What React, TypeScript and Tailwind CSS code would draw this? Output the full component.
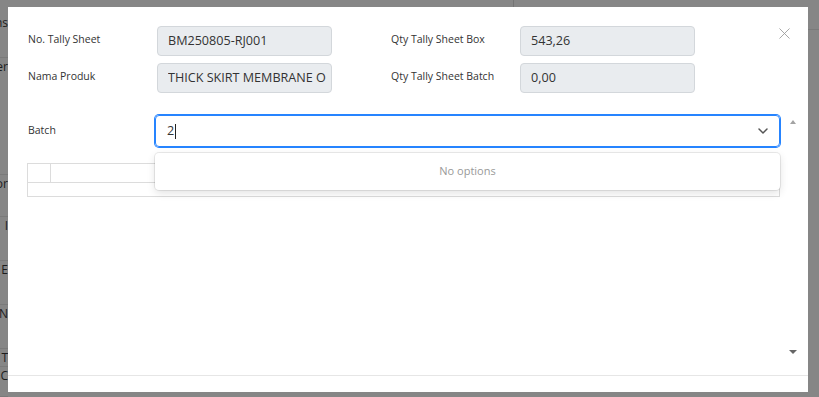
import { ChevronDown, X } from "lucide-react";

const BG_ROWS = [
  { t: "Trans", h: "h-[44px]" },
  { t: "Supplier", h: "h-[117px]" },
  { t: "Nomor", h: "h-[42px]" },
  { t: "I", h: "h-[44px]" },
  { t: "E", h: "h-[44px]" },
  { t: "N", h: "h-[44px]" },
  { t: "T", h: "h-[18px]" },
  { t: "C", h: "h-[30px]" },
];

function Field({ label, value }: { label: string; value: string }) {
  return (
    <div className="flex items-center">
      <div className="mb-[3px] w-[129px] text-[10.5px] text-[#333]">{label}</div>
      <div className="flex h-[30px] w-[175px] items-center rounded-[4px] border border-[#d3d7db] bg-[#e9ecef] pl-[10px] pr-[5px] text-[12.6px] text-[#333]">
        <div className="flex-1 overflow-hidden whitespace-nowrap">{value}</div>
      </div>
    </div>
  );
}

export default function App() {
  return (
    <div className="relative h-[397px] w-[819px] overflow-hidden bg-[#868686] font-['Open_Sans','Noto_Sans',sans-serif]">
      {/* page behind the overlay */}
      <div className="flex h-full">
        <div className="flex w-[8px] flex-col pt-[14px] text-[12px] text-[#1c1c1c]">
          {BG_ROWS.map((r, i) => (
            <div key={i} className={`${r.h} flex justify-end overflow-hidden whitespace-nowrap border-b border-[#7a7a7a]`}>
              {r.t}
            </div>
          ))}
        </div>
        <div className="ml-[505px] h-[7px] w-px bg-[#747474]" />
        <div className="ml-auto mt-[29px] h-px w-[11px] bg-[#7a7a7a]" />
      </div>

      {/* modal */}
      <div className="absolute left-[8px] top-[7px] flex h-[385px] w-[800px] flex-col bg-white">
        <div className="relative flex flex-1 flex-col px-[20px] pt-[19px]">
          <button className="absolute right-[14px] top-[17px] text-[#9a9a9a]">
            <X className="h-[19px] w-[19px]" strokeWidth={1.1} />
          </button>
          <div className="flex gap-[59px]">
            <div className="flex flex-col gap-[7px]">
              <Field label="No. Tally Sheet" value="BM250805-RJ001" />
              <Field label="Nama Produk" value="THICK SKIRT MEMBRANE O" />
            </div>
            <div className="flex flex-col gap-[7px]">
              <Field label="Qty Tally Sheet Box" value="543,26" />
              <Field label="Qty Tally Sheet Batch" value="0,00" />
            </div>
          </div>

          <div className="mt-[22px] flex flex-1">
            <div className="mr-px flex flex-1 flex-col">
              <div className="flex items-center">
                <div className="w-[127px] text-[10.5px] text-[#333]">Batch</div>
                <div className="relative flex-1">
                  <div className="flex h-[32px] items-center rounded-[4px] border border-[#2684ff] pl-[11px] pr-[8px] shadow-[0_0_0_1px_#2684ff] text-[12.6px] text-[#333]">
                    <span>2</span>
                    <span className="ml-px h-[15px] w-px bg-[#222]" />
                    <ChevronDown className="ml-auto h-[16px] w-[16px] text-[#555]" strokeWidth={2.2} />
                  </div>
                  <div className="absolute left-0 right-0 top-[38px] z-10 flex h-[37px] items-center justify-center rounded-[4px] bg-white text-[11px] text-[#999] shadow-[0_0_0_1px_rgba(0,0,0,0.08),0_3px_8px_rgba(0,0,0,0.12)]">
                    No options
                  </div>
                </div>
              </div>
              <div className="ml-[-1px] mt-[16px] border border-[#dcdcdc]">
                <div className="flex h-[19px] border-b border-[#dcdcdc]">
                  <div className="w-[23px] border-r border-[#dcdcdc]" />
                </div>
                <div className="h-[13px]" />
              </div>
            </div>
            <div className="ml-[8px] mr-[-9px] flex w-[8px] flex-col items-center justify-between pb-[21px] pt-[5px]">
              <div className="h-0 w-0 border-x-[3px] border-b-[4px] border-x-transparent border-b-[#a3a3a3]" />
              <div className="h-0 w-0 border-x-[4px] border-t-[4px] border-x-transparent border-t-[#666]" />
            </div>
          </div>
        </div>
        <div className="h-[17px] border-t border-[#e6e6e6]" />
      </div>
    </div>
  );
}
